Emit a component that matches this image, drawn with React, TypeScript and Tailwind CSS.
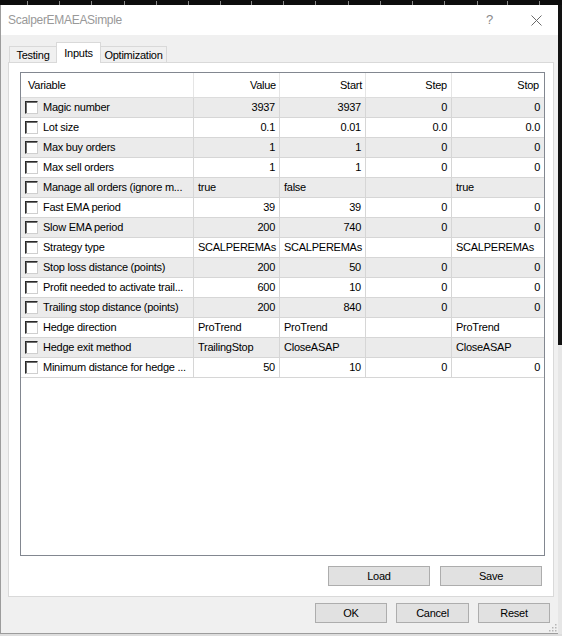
import React from 'react';

type Row = { name: string; cells: string[] };

const rows: Row[] = [
  { name: 'Magic number', cells: ['3937', '3937', '0', '0'] },
  { name: 'Lot size', cells: ['0.1', '0.01', '0.0', '0.0'] },
  { name: 'Max buy orders', cells: ['1', '1', '0', '0'] },
  { name: 'Max sell orders', cells: ['1', '1', '0', '0'] },
  { name: 'Manage all orders (ignore m...', cells: ['true', 'false', '', 'true'] },
  { name: 'Fast EMA period', cells: ['39', '39', '0', '0'] },
  { name: 'Slow EMA period', cells: ['200', '740', '0', '0'] },
  { name: 'Strategy type', cells: ['SCALPEREMAs', 'SCALPEREMAs', '', 'SCALPEREMAs'] },
  { name: 'Stop loss distance (points)', cells: ['200', '50', '0', '0'] },
  { name: 'Profit needed to activate trail...', cells: ['600', '10', '0', '0'] },
  { name: 'Trailing stop distance (points)', cells: ['200', '840', '0', '0'] },
  { name: 'Hedge direction', cells: ['ProTrend', 'ProTrend', '', 'ProTrend'] },
  { name: 'Hedge exit method', cells: ['TrailingStop', 'CloseASAP', '', 'CloseASAP'] },
  { name: 'Minimum distance for hedge ...', cells: ['50', '10', '0', '0'] },
];

const isNum = (v: string) => /^[\d.]+$/.test(v);

const cols = 'grid grid-cols-[173px_86px_86px_86px_1fr]';

const ticks = [27, 59, 91, 124, 156, 188, 220, 251, 283, 315, 348, 380, 412, 444, 477, 507, 539];

// sunken classic checkbox: dark top/left, light bottom/right
const Checkbox = () => (
  <span className="w-[13px] h-[13px] shrink-0 bg-white border border-t-[#2a2a2a] border-l-[#2a2a2a] border-r-[#cfcfcf] border-b-[#cfcfcf] shadow-[inset_1px_1px_0_#6e6e6e]" />
);

const Button = ({ label, width }: { label: string; width: string }) => (
  <button
    className={`${width} h-[20px] bg-[#e1e1e1] border border-[#adadad] text-[11px] text-black flex items-center justify-center`}
  >
    {label}
  </button>
);

export default function App() {
  return (
    <div className="w-[562px] h-[636px] bg-[#dedede] flex flex-col font-['Liberation_Sans',Arial,sans-serif] tracking-[-0.25px] overflow-hidden">
      <svg width="562" height="5" className="block shrink-0">
        <rect width="562" height="5" fill="#0d0d0d" />
        {ticks.map((x) => (
          <line key={x} x1={x + 0.5} y1="1" x2={x + 0.5} y2="5" stroke="#8a8a8a" strokeWidth="1" />
        ))}
      </svg>
      <div className="flex">
        <div className="w-[558px] h-[629px] bg-[#f0f0f0] border-l border-b border-[#9c9c9c] flex flex-col">
          {/* title bar */}
          <div className="h-[30px] bg-white flex items-center pl-[7px]">
            <span className="text-[12px] text-[#999] tracking-[-0.3px]">ScalperEMAEASimple</span>
            <span className="ml-auto mr-[38px] text-[13px] text-[#8a8a8a]">?</span>
            <svg width="11" height="11" viewBox="0 0 11 11" className="mr-[16px]">
              <path d="M0.5 0.5 L10.5 10.5 M10.5 0.5 L0.5 10.5" stroke="#6a6a6a" strokeWidth="1" fill="none" />
            </svg>
          </div>
          {/* tabs */}
          <div className="h-[27px] flex items-end pl-[8px]">
            <div className="w-[47px] h-[16px] border-t border-l border-[#d9d9d9] text-[11px] flex items-center justify-center pt-[1px]">
              Testing
            </div>
            <div className="relative z-10 w-[45px] h-[21px] -mb-px bg-white border-t border-l border-r border-[#d9d9d9] text-[11px] flex items-start justify-center pt-[2px]">
              Inputs
            </div>
            <div className="w-[66px] h-[16px] border-t border-r border-[#d9d9d9] text-[11px] flex items-center justify-center pt-[1px]">
              Optimization
            </div>
          </div>
          {/* tab page */}
          <div className="ml-[7px] w-[546px] h-[535px] bg-white border border-[#d9d9d9] pt-[9px] pl-[11px] flex flex-col">
            <div className="w-[525px] h-[484px] border border-[#828790] bg-white text-[11px] text-black">
              <div className={`${cols} h-[25px] border-b border-[#dcdcdc]`}>
                <div className="border-r border-[#e5e5e5] flex items-center pl-[7px]">Variable</div>
                <div className="border-r border-[#e5e5e5] flex items-center justify-end pr-[3px]">Value</div>
                <div className="border-r border-[#e5e5e5] flex items-center justify-end pr-[3px]">Start</div>
                <div className="border-r border-[#e5e5e5] flex items-center justify-end pr-[4px]">Step</div>
                <div className="flex items-center justify-end pr-[5px]">Stop</div>
              </div>
              {rows.map((r, i) => (
                <div
                  key={r.name}
                  className={`${cols} h-[20px] border-b border-[#d6d6d6] ${i % 2 === 0 ? 'bg-[#ebebeb]' : 'bg-white'}`}
                >
                  <div className="border-r border-[#d6d6d6] flex items-center pl-[4px] gap-[5px] whitespace-nowrap overflow-hidden">
                    <Checkbox />
                    <span>{r.name}</span>
                  </div>
                  {r.cells.map((c, j) => (
                    <div
                      key={j}
                      className={`flex items-center whitespace-nowrap overflow-hidden ${j < 3 ? 'border-r border-[#d6d6d6]' : ''} ${
                        isNum(c) ? 'justify-end pr-[4px]' : 'justify-start pl-[4px]'
                      }`}
                    >
                      {c}
                    </div>
                  ))}
                </div>
              ))}
            </div>
            <div className="w-[525px] mt-[10px] flex justify-end gap-[10px] pr-[3px]">
              <Button label="Load" width="w-[102px]" />
              <Button label="Save" width="w-[102px]" />
            </div>
          </div>
          {/* bottom buttons */}
          <div className="flex-1 relative flex justify-end items-start pt-[6px] pr-[8px] gap-[9px]">
            <Button label="OK" width="w-[72px]" />
            <Button label="Cancel" width="w-[73px]" />
            <Button label="Reset" width="w-[72px]" />
            <svg width="9" height="9" className="absolute right-[1px] bottom-[1px]">
              {[
                [7, 1],
                [7, 4],
                [4, 4],
                [7, 7],
                [4, 7],
                [1, 7],
              ].map(([x, y]) => (
                <rect key={`${x}-${y}`} x={x} y={y} width="1.5" height="1.5" fill="#b5b5b5" />
              ))}
            </svg>
          </div>
        </div>
        <div className="w-[4px] flex flex-col">
          <div className="h-[340px] bg-[#121212]" />
          <div className="flex-1 bg-[#e6e6e6]" />
        </div>
      </div>
    </div>
  );
}
